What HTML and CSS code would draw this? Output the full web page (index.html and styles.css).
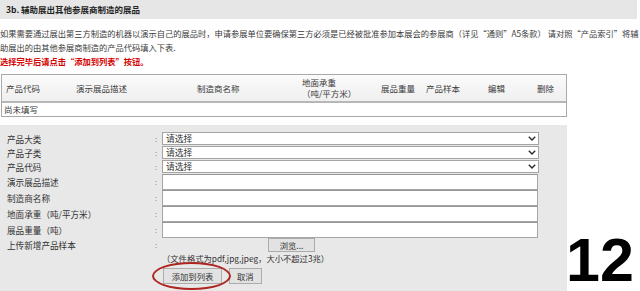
FILE: index.html
```html
<!DOCTYPE html>
<html lang="zh-CN">
<head>
<meta charset="utf-8">
<title>辅助展出其他参展商制造的展品</title>
<link rel="stylesheet" href="styles.css">
</head>
<body>
<div class="title-bar">3b. 辅助展出其他参展商制造的展品</div>
<p class="intro">如果需要通过展出第三方制造的机器以演示自己的展品时，申请参展单位要确保第三方必须是已经被批准参加本展会的参展商（详见“通则”A5条款） 请对照“产品索引”将辅<br>助展出的由其他参展商制造的产品代码填入下表.<br><span class="warn">选择完毕后请点击“添加到列表”按钮。</span></p>

<div class="list">
  <div class="list-head">
    <div class="th first">产品代码</div>
    <div class="th">演示展品描述</div>
    <div class="th">制造商名称</div>
    <div class="th">地面承重<br>（吨/平方米）</div>
    <div class="th">展品重量</div>
    <div class="th">产品样本</div>
    <div class="th">编辑</div>
    <div class="th">删除</div>
  </div>
  <div class="list-empty">尚未填写</div>
</div>

<div class="panel-row">
  <div class="panel">
    <div class="frow">
      <span class="flabel">产品大类</span><span class="fcolon">:</span>
      <div class="select"><span>请选择</span><svg class="chev" width="8" height="5" viewBox="0 0 8 5"><path d="M0.8 0.8 L4 4 L7.2 0.8" fill="none" stroke="#2b2b2b" stroke-width="1.4"/></svg></div>
    </div>
    <div class="frow">
      <span class="flabel">产品子类</span><span class="fcolon">:</span>
      <div class="select"><span>请选择</span><svg class="chev" width="8" height="5" viewBox="0 0 8 5"><path d="M0.8 0.8 L4 4 L7.2 0.8" fill="none" stroke="#2b2b2b" stroke-width="1.4"/></svg></div>
    </div>
    <div class="frow">
      <span class="flabel">产品代码</span><span class="fcolon">:</span>
      <div class="select"><span>请选择</span><svg class="chev" width="8" height="5" viewBox="0 0 8 5"><path d="M0.8 0.8 L4 4 L7.2 0.8" fill="none" stroke="#2b2b2b" stroke-width="1.4"/></svg></div>
    </div>
    <div class="frow tall">
      <span class="flabel">演示展品描述</span><span class="fcolon">:</span>
      <div class="input"></div>
    </div>
    <div class="frow tall">
      <span class="flabel">制造商名称</span><span class="fcolon">:</span>
      <div class="input"></div>
    </div>
    <div class="frow tall">
      <span class="flabel">地面承重（吨/平方米）</span><span class="fcolon">:</span>
      <div class="input"></div>
    </div>
    <div class="frow tall">
      <span class="flabel">展品重量（吨）</span><span class="fcolon">:</span>
      <div class="input"></div>
    </div>
    <div class="frow">
      <span class="flabel">上传新增产品样本</span><span class="fcolon">:</span>
      <div class="file"><span class="file-blank"></span><span class="btn browse">浏览...</span></div>
    </div>
    <div class="note">（文件格式为pdf,jpg,jpeg，大小不超过3兆）</div>
    <div class="actions">
      <span class="btn add">添加到列表</span>
      <span class="btn">取消</span>
      <span class="circle"></span>
    </div>
  </div>
  <div class="page-num">12</div>
</div>
</body>
</html>
```
FILE: styles.css
```css
html, body {
  margin: 0;
  padding: 0;
}
body {
  width: 640px;
  height: 291px;
  overflow: hidden;
  background: #ffffff;
  color: #363636;
  font-family: "Noto Sans CJK SC", "Noto Sans", sans-serif;
}

.title-bar {
  width: 631px;
  height: 19px;
  padding-left: 6px;
  background: #e6e6e6;
  font-size: 8.5px;
  font-weight: bold;
  line-height: 19px;
  color: #222;
}

.intro {
  margin: 7px 0 0;
  font-size: 8.25px;
  line-height: 14px;
  white-space: nowrap;
  color: #3a3a3a;
}
.warn {
  color: #d50000;
  font-weight: bold;
}

.list {
  margin: 6px 0 0 1px;
  width: 564px;
  border: 1px solid #a9a9a9;
  font-size: 8.5px;
}
.list-head {
  display: grid;
  grid-template-columns: 69px 121px 105px 79px 45px 62px 49px 34px;
  align-items: center;
  height: 26px;
  background: linear-gradient(#fbfbfb, #efefef);
  border-bottom: 2px solid #b7b7b7;
  line-height: 11px;
}
.th {
  padding-left: 5px;
  white-space: nowrap;
  color: #3a3a3a;
}
.th.first {
  padding-left: 4px;
}
.list-empty {
  height: 13px;
  line-height: 13px;
  padding-left: 2px;
  background: #fff;
}

.panel-row {
  display: flex;
  margin-top: 8px;
}
.panel {
  width: 560px;
  height: 160px;
  padding: 7px 0 0 7px;
  background: #e8e8e8;
  flex: none;
}

.frow {
  display: grid;
  grid-template-columns: 146px 9px 377px;
  align-items: center;
  height: 14px;
}
.frow.tall {
  height: 16px;
}
.flabel {
  font-size: 8.6px;
  line-height: 12px;
  white-space: nowrap;
  color: #333;
}
.fcolon {
  padding-left: 2px;
  font-size: 8px;
  line-height: 12px;
  color: #8a8a8a;
}
.select {
  box-sizing: border-box;
  height: 13px;
  display: flex;
  align-items: center;
  justify-content: space-between;
  padding: 0 2px 0 3px;
  background: #fff;
  border: 1px solid #a3a3a3;
  font-size: 8.8px;
  line-height: 11px;
  color: #333;
  align-self: start;
}
.chev {
  display: block;
}
.input {
  box-sizing: border-box;
  height: 16px;
  width: 376px;
  background: #fff;
  border: 1px solid #a6a6a6;
  border-top-color: #969696;
}

.file {
  display: flex;
  height: 14px;
}
.file-blank {
  width: 106px;
}
.btn {
  box-sizing: border-box;
  display: inline-flex;
  align-items: center;
  justify-content: center;
  background: #e2e2e2;
  border: 1px solid #acacac;
  font-size: 8.3px;
  color: #333;
  white-space: nowrap;
}
.browse {
  width: 47px;
  height: 14px;
}

.note {
  margin-left: 155px;
  height: 12px;
  font-size: 8.3px;
  line-height: 12px;
  white-space: nowrap;
  color: #333;
}

.actions {
  position: relative;
  display: flex;
  gap: 7px;
  margin: 4px 0 0 156px;
}
.actions .btn {
  height: 16px;
  padding: 0 7px;
}
.actions .btn.add {
  width: 59px;
  padding: 0;
}
.circle {
  position: absolute;
  left: -11px;
  top: -6px;
  width: 75px;
  height: 24px;
  border: 2px solid #ad2620;
  border-radius: 50%;
}

.page-num {
  margin-left: -1px;
  padding-top: 110px;
  font-family: "Liberation Sans", Arial, sans-serif;
  font-weight: bold;
  font-size: 61px;
  line-height: 50px;
  color: #000;
}
```
